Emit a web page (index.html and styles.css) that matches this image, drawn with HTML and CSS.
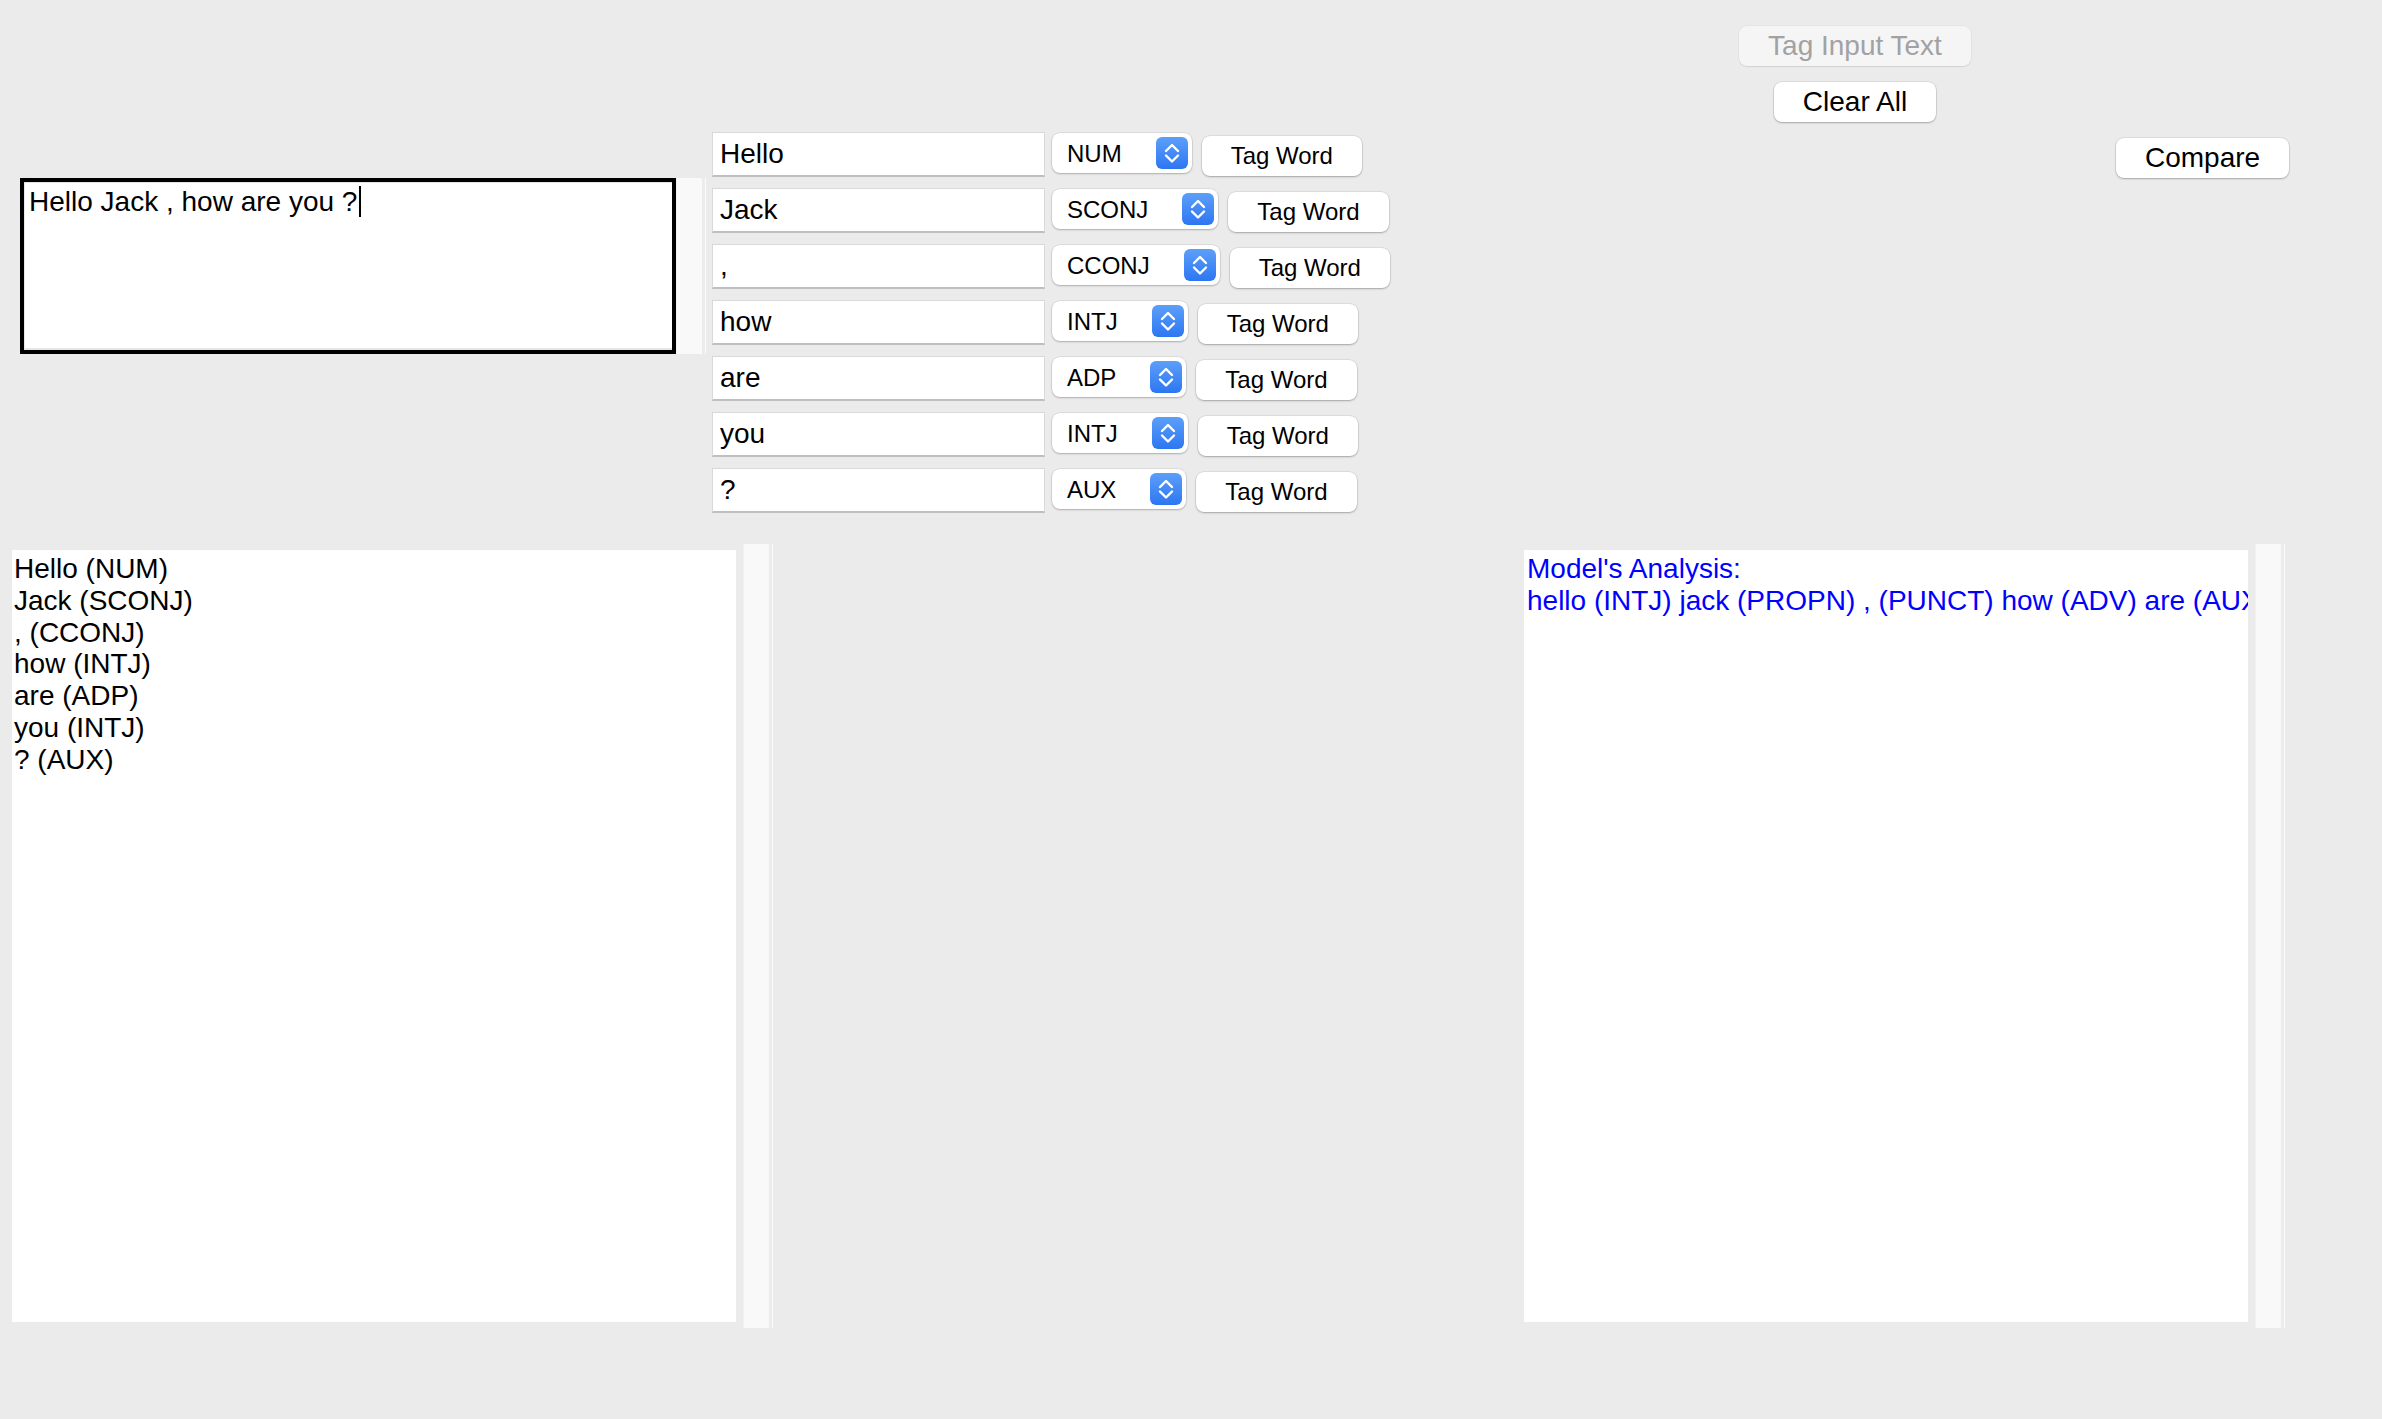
FILE: index.html
```html
<!DOCTYPE html>
<html lang="en">
<head>
<meta charset="utf-8">
<title>POS Tagger</title>
<link rel="stylesheet" href="styles.css">
</head>
<body>
<div class="app">
  <div class="top">
    <div class="input-col">
      <div class="text-input">Hello Jack , how are you ?<span class="caret"></span></div>
      <div class="track track-short"></div>
    </div>

    <div class="words-col">
      <div class="word-row">
        <input class="word-field" type="text" value="Hello">
        <div class="pos-select"><span class="pos-value">NUM</span><span class="chev"><svg viewBox="0 0 32 32" width="32" height="32"><path d="M10 14 L16 8 L22 14 M10 18.5 L16 24.5 L22 18.5" fill="none" stroke="#fff" stroke-width="2.4" stroke-linecap="round" stroke-linejoin="round"/></svg></span></div>
        <button class="btn btn-small">Tag Word</button>
      </div>
      <div class="word-row">
        <input class="word-field" type="text" value="Jack">
        <div class="pos-select"><span class="pos-value">SCONJ</span><span class="chev"><svg viewBox="0 0 32 32" width="32" height="32"><path d="M10 14 L16 8 L22 14 M10 18.5 L16 24.5 L22 18.5" fill="none" stroke="#fff" stroke-width="2.4" stroke-linecap="round" stroke-linejoin="round"/></svg></span></div>
        <button class="btn btn-small">Tag Word</button>
      </div>
      <div class="word-row">
        <input class="word-field" type="text" value=",">
        <div class="pos-select"><span class="pos-value">CCONJ</span><span class="chev"><svg viewBox="0 0 32 32" width="32" height="32"><path d="M10 14 L16 8 L22 14 M10 18.5 L16 24.5 L22 18.5" fill="none" stroke="#fff" stroke-width="2.4" stroke-linecap="round" stroke-linejoin="round"/></svg></span></div>
        <button class="btn btn-small">Tag Word</button>
      </div>
      <div class="word-row">
        <input class="word-field" type="text" value="how">
        <div class="pos-select"><span class="pos-value">INTJ</span><span class="chev"><svg viewBox="0 0 32 32" width="32" height="32"><path d="M10 14 L16 8 L22 14 M10 18.5 L16 24.5 L22 18.5" fill="none" stroke="#fff" stroke-width="2.4" stroke-linecap="round" stroke-linejoin="round"/></svg></span></div>
        <button class="btn btn-small">Tag Word</button>
      </div>
      <div class="word-row">
        <input class="word-field" type="text" value="are">
        <div class="pos-select"><span class="pos-value">ADP</span><span class="chev"><svg viewBox="0 0 32 32" width="32" height="32"><path d="M10 14 L16 8 L22 14 M10 18.5 L16 24.5 L22 18.5" fill="none" stroke="#fff" stroke-width="2.4" stroke-linecap="round" stroke-linejoin="round"/></svg></span></div>
        <button class="btn btn-small">Tag Word</button>
      </div>
      <div class="word-row">
        <input class="word-field" type="text" value="you">
        <div class="pos-select"><span class="pos-value">INTJ</span><span class="chev"><svg viewBox="0 0 32 32" width="32" height="32"><path d="M10 14 L16 8 L22 14 M10 18.5 L16 24.5 L22 18.5" fill="none" stroke="#fff" stroke-width="2.4" stroke-linecap="round" stroke-linejoin="round"/></svg></span></div>
        <button class="btn btn-small">Tag Word</button>
      </div>
      <div class="word-row">
        <input class="word-field" type="text" value="?">
        <div class="pos-select"><span class="pos-value">AUX</span><span class="chev"><svg viewBox="0 0 32 32" width="32" height="32"><path d="M10 14 L16 8 L22 14 M10 18.5 L16 24.5 L22 18.5" fill="none" stroke="#fff" stroke-width="2.4" stroke-linecap="round" stroke-linejoin="round"/></svg></span></div>
        <button class="btn btn-small">Tag Word</button>
      </div>
    </div>

    <div class="actions-col">
      <button class="btn" disabled>Tag Input Text</button>
      <button class="btn">Clear All</button>
    </div>

    <div class="compare-col">
      <button class="btn">Compare</button>
    </div>
  </div>

  <div class="bottom">
    <div class="pane-group">
      <div class="pane">
        <div>Hello (NUM)</div>
        <div>Jack (SCONJ)</div>
        <div>, (CCONJ)</div>
        <div>how (INTJ)</div>
        <div>are (ADP)</div>
        <div>you (INTJ)</div>
        <div>? (AUX)</div>
      </div>
      <div class="track"></div>
    </div>
    <div class="pane-group pane-group-right">
      <div class="pane pane-model">
        <div>Model's Analysis:</div>
        <div>hello (INTJ) jack (PROPN) , (PUNCT) how (ADV) are (AUX) you (PRON) ? (PUNCT)</div>
      </div>
      <div class="track"></div>
    </div>
  </div>
</div>
</body>
</html>
```

FILE: styles.css
```css
html, body {
  margin: 0;
  padding: 0;
  background: #ebebeb;
}

body {
  font-family: "Liberation Sans", Arial, Helvetica, sans-serif;
  font-size: 28px;
  color: #000;
}

.app {
  width: 2382px;
  height: 1419px;
}

/* ---------- top area ---------- */
.top {
  display: flex;
  align-items: flex-start;
}

.input-col {
  display: flex;
  margin-left: 20px;
  margin-top: 178px;
}

.text-input {
  box-sizing: border-box;
  width: 656px;
  height: 176px;
  background: #fff;
  border: 4px solid #000;
  box-shadow: inset 0 1px 0 #e2e2e2, inset 1px 0 0 #e8e8e8, inset 0 -2px 0 #e6e6e6;
  padding: 4px 5px;
  font-size: 28px;
  line-height: 32px;
  white-space: pre;
}

.caret {
  display: inline-block;
  width: 1.5px;
  height: 31px;
  background: #000;
  vertical-align: top;
  margin-left: 2px;
}

.track {
  box-sizing: border-box;
  width: 29px;
  height: 784px;
  background: #f9f9f9;
  border-left: 1px solid #f1f1f1;
  border-right: 3px solid #ececec;
  box-shadow: 1px 0 0 #fbfbfb;
}

.track-short {
  height: 176px;
}

.words-col {
  display: flex;
  flex-direction: column;
  gap: 11px;
  width: 690px;
  margin-left: 7px;
  margin-top: 132px;
}

.word-row {
  display: flex;
  align-items: flex-start;
  height: 45px;
}

.word-field {
  box-sizing: border-box;
  width: 333px;
  height: 45px;
  margin: 0;
  padding: 0 7px;
  border: 1px solid #d9d9d9;
  border-bottom: 2px solid #bfbfbf;
  border-radius: 0;
  background: #fff;
  font-family: inherit;
  font-size: 28px;
  color: #000;
  outline: none;
}

.pos-select {
  box-sizing: border-box;
  display: inline-flex;
  align-items: center;
  height: 40px;
  margin-left: 7px;
  margin-top: 1px;
  padding: 0 4px 0 15px;
  background: #fff;
  border-radius: 8px;
  box-shadow: 0 0 0 0.5px rgba(0, 0, 0, 0.12), 0 1px 2px rgba(0, 0, 0, 0.22);
  font-size: 24px;
}

.pos-value {
  margin-right: 34px;
  line-height: 1;
  padding-top: 1px;
}

.chev {
  display: block;
  width: 32px;
  height: 32px;
  border-radius: 6px;
  background: linear-gradient(#5c9ffa, #2d76f2);
}

.chev svg {
  display: block;
}

.btn {
  box-sizing: border-box;
  height: 40px;
  margin: 0;
  padding: 0 29px;
  border: none;
  border-radius: 8px;
  background: #fff;
  box-shadow: 0 0 0 0.5px rgba(0, 0, 0, 0.12), 0 1px 2px rgba(0, 0, 0, 0.25);
  font-family: inherit;
  font-size: 28px;
  color: #000;
  white-space: nowrap;
}

.btn:disabled {
  background: #f5f5f5;
  color: #a2a2a2;
  box-shadow: 0 0 0 0.5px rgba(0, 0, 0, 0.06), 0 1px 1px rgba(0, 0, 0, 0.08);
}

.btn-small {
  font-size: 24px;
  margin-left: 10px;
  margin-top: 4px;
}

.actions-col {
  display: flex;
  flex-direction: column;
  align-items: center;
  gap: 16px;
  width: 400px;
  margin-left: 253px;
  margin-top: 26px;
}

.compare-col {
  margin-left: 61px;
  margin-top: 138px;
}

/* ---------- bottom area ---------- */
.bottom {
  display: flex;
  align-items: flex-start;
  margin-top: 31px;
}

.pane-group {
  display: flex;
  align-items: center;
  gap: 7px;
  margin-left: 12px;
}

.pane-group-right {
  margin-left: 752px;
}

.pane {
  box-sizing: border-box;
  width: 724px;
  height: 772px;
  background: #fff;
  padding: 3px 2px;
  font-size: 28px;
  line-height: 31.8px;
  overflow: hidden;
  white-space: nowrap;
}

.pane-model {
  color: #0000ff;
  padding-left: 3px;
}
```
